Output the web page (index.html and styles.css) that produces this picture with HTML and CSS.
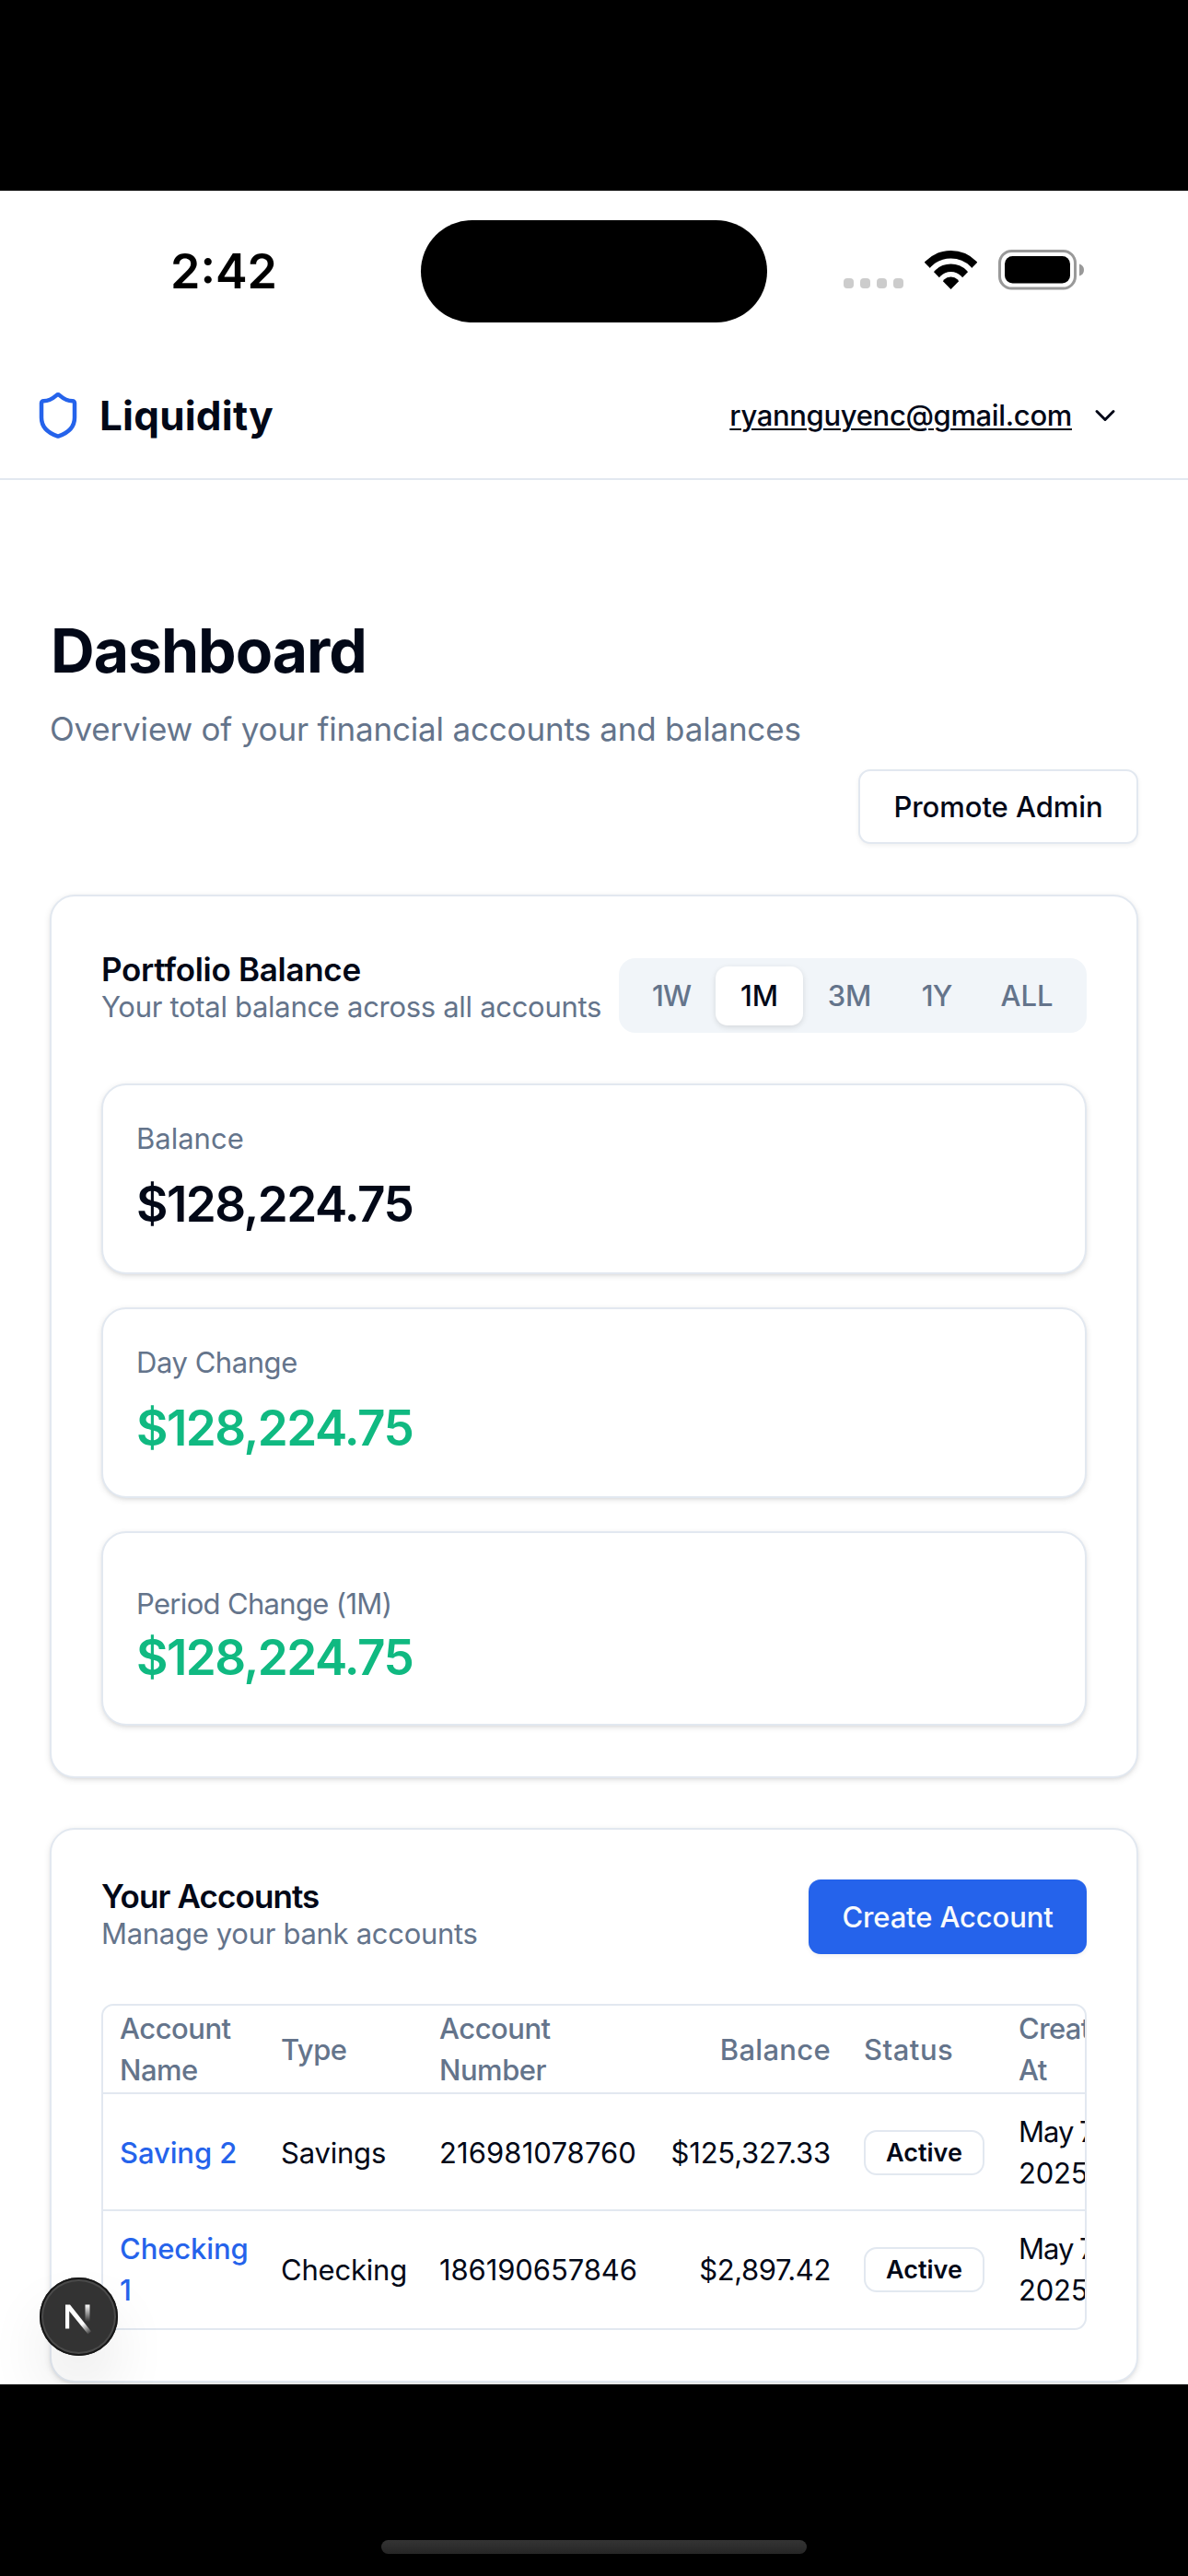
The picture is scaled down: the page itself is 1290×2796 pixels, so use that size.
FILE: index.html
```
<!DOCTYPE html>
<html lang="en">
<head>
<meta charset="utf-8">
<title>Liquidity – Dashboard</title>
<link rel="stylesheet" href="styles.css">
</head>
<body>
<div class="screen">
  <div class="statusbar">
    <div class="clock">2:42</div>
    <div class="island"></div>
    <div class="indicators">
      <div class="signal"><i></i><i></i><i></i><i></i></div>
      <svg class="wifi" viewBox="0 0 57 42">
        <clipPath id="fan"><path d="M28.5 42L-6 6.9V-4H63V6.900Z"/></clipPath>
        <g clip-path="url(#fan)">
          <circle cx="28.5" cy="39" r="34.75" fill="none" stroke="#000" stroke-width="8.5"/>
          <circle cx="28.5" cy="39" r="20.25" fill="none" stroke="#000" stroke-width="8.500"/>
          <circle cx="28.5" cy="39" r="10.5"/>
        </g>
      </svg>
      <svg class="battery" viewBox="0 0 93 44">
        <rect x="1.5" y="1.500" width="82" height="40.500" rx="13" fill="none" stroke="#999" stroke-width="3"/>
        <rect x="7" y="7" width="71" height="29.500" rx="8.500"/>
        <path d="M88 15.500q5 1.500 5 6.500t-5 6.500Z" fill="#999"/>
      </svg>
    </div>
  </div>

  <header class="topbar">
    <div class="brand">
      <svg class="shield" viewBox="0 0 24 24" fill="none" stroke="currentColor" stroke-width="2" stroke-linecap="round" stroke-linejoin="round"><path d="M20 13c0 5-3.500 7.500-7.660 8.950a1 1 0 0 1-.67-.01C7.500 20.500 4 18 4 13V6a1 1 0 0 1 1-1c2 0 4.500-1.200 6.240-2.720a1.170 1.170 0 0 1 1.520 0C14.510 3.810 17 5 19 5a1 1 0 0 1 1 1z"/></svg>
      <span class="brand-name">Liquidity</span>
    </div>
    <div class="user">
      <a class="email">ryannguyenc@gmail.com</a>
      <svg class="chevron" viewBox="0 0 24 24" fill="none" stroke="currentColor" stroke-width="2" stroke-linecap="round" stroke-linejoin="round"><path d="m6 9 6 6 6-6"/></svg>
    </div>
  </header>

  <main class="page">
    <h1>Dashboard</h1>
    <p class="lead">Overview of your financial accounts and balances</p>
    <div class="actions"><button class="btn btn-outline">Promote Admin</button></div>

    <section class="card portfolio">
      <div class="card-head">
        <div>
          <h2>Portfolio Balance</h2>
          <p class="desc">Your total balance across all accounts</p>
        </div>
        <div class="tabs">
          <span class="tab tab-1w">1W</span>
          <span class="tab tab-1m active">1M</span>
          <span class="tab tab-3m">3M</span>
          <span class="tab tab-1y">1Y</span>
          <span class="tab tab-all">ALL</span>
        </div>
      </div>
      <div class="stats">
        <div class="stat">
          <div class="label">Balance</div>
          <div class="amount">$128,224.75</div>
        </div>
        <div class="stat">
          <div class="label label-day">Day Change</div>
          <div class="amount up">$128,224.75</div>
        </div>
        <div class="stat stat-period">
          <div class="label label-period">Period Change (1M)</div>
          <div class="amount up">$128,224.75</div>
        </div>
      </div>
    </section>

    <section class="card accounts">
      <div class="card-head">
        <div>
          <h2 class="tight">Your Accounts</h2>
          <p class="desc">Manage your bank accounts</p>
        </div>
        <button class="btn btn-primary">Create Account</button>
      </div>
      <div class="table-wrap">
        <table>
          <colgroup><col class="c-name"><col class="c-type"><col class="c-number"><col class="c-balance"><col class="c-status"><col class="c-created"></colgroup>
          <thead>
            <tr><th class="narrow">Account<br>Name</th><th class="narrow">Type</th><th class="narrow">Account<br>Number</th><th class="num">Balance</th><th class="wide">Status</th><th class="created">Created<br>At</th></tr>
          </thead>
          <tbody>
            <tr><td><a class="link">Saving 2</a></td><td>Savings</td><td class="digits">216981078760</td><td class="num">$125,327.33</td><td><span class="badge">Active</span></td><td class="created"><span class="day">May 7,</span><br>2025</td></tr>
            <tr><td><a class="link">Checking<br>1</a></td><td>Checking</td><td class="digits-b">186190657846</td><td class="num num-tight">$2,897.42</td><td><span class="badge">Active</span></td><td class="created"><span class="day">May 7,</span><br>2025</td></tr>
          </tbody>
        </table>
      </div>
    </section>
  </main>

  <div class="dev-badge">
    <svg viewBox="0 0 85 85">
      <defs>
        <linearGradient id="diag" gradientUnits="userSpaceOnUse" x1="40" y1="44" x2="54" y2="62"><stop offset="0" stop-color="#fff"/><stop offset=".4" stop-color="#fff"/><stop offset="1" stop-color="#fff" stop-opacity="0"/></linearGradient>
        <linearGradient id="stem" gradientUnits="userSpaceOnUse" x1="0" y1="29.5" x2="0" y2="48"><stop offset="0" stop-color="#fff"/><stop offset="1" stop-color="#fff" stop-opacity="0"/></linearGradient>
      </defs>
      <path d="M28 55.500V29.500H33L56 58.500L52.500 61.500L32.200 36.500V55.500Z" fill="url(#diag)"/>
      <rect x="49.500" y="29.500" width="5" height="18.500" fill="url(#stem)"/>
    </svg>
  </div>
</div>
<div class="home"><div class="home-bar"></div></div>
</body>
</html>
```
FILE: styles.css
```
* { box-sizing: border-box; }
html, body { margin: 0; }
body {
  width: 1290px;
  height: 2796px;
  padding-top: 207px;
  background: #000;
  color: #020817;
  font-family: Inter, "Liberation Sans", sans-serif;
  font-size: 31px;
  line-height: 45px;
  overflow: hidden;
}
h1, h2, p { margin: 0; }
svg { display: block; flex: none; }

.screen {
  position: relative;
  height: 2381px;
  background: #fff;
  overflow: hidden;
}

/* phone status bar */
.statusbar {
  display: grid;
  grid-template-columns: 457px 376px 1fr;
  align-items: center;
  height: 175px;
}
.clock {
  padding-left: 185px;
  color: #000;
  font-size: 52px;
  font-weight: 600;
}
.island { height: 111px; border-radius: 56px; background: #000; }
.indicators {
  display: flex;
  align-items: center;
  padding-left: 83px;
  margin-top: -4px;
}
.signal { display: flex; gap: 7px; margin-top: 29px; }
.signal i { width: 11px; height: 11px; border-radius: 4px; background: #ccc; }
.wifi { width: 57px; height: 42px; margin-left: 23px; }
.battery { width: 93px; height: 44px; margin-left: 23px; }

/* app header */
.topbar {
  display: flex;
  align-items: center;
  justify-content: space-between;
  height: 139px;
  padding: 0 72px 0 36px;
  border-bottom: 2px solid #e2e8f0;
}
.brand { display: flex; align-items: center; gap: 18px; }
.shield { width: 54px; height: 54px; color: #2563eb; }
.brand-name { padding-top: 1px; font-size: 44px; font-weight: 700; letter-spacing: .2px; }
.user { display: flex; align-items: center; gap: 18px; }
.email {
  font-weight: 500;
  letter-spacing: -.34px;
  text-decoration: underline;
  text-decoration-thickness: 2px;
  text-underline-offset: 3px;
}
.chevron { width: 36px; height: 36px; }

/* page */
.page { padding: 145px 54px 0; }
h1 { padding-left: 1px; font-size: 66px; line-height: 80px; font-weight: 700; letter-spacing: -1px; }
.lead {
  margin-top: 18px;
  color: #64748b;
  font-size: 35px;
  line-height: 54px;
  letter-spacing: -.19px;
}
.actions { display: flex; justify-content: flex-end; margin-top: 17px; }
.btn {
  display: flex;
  align-items: center;
  justify-content: center;
  height: 81px;
  padding: 0;
  border: 0;
  border-radius: 13px;
  font: 500 31px/45px Inter, "Liberation Sans", sans-serif;
  box-shadow: 0 2px 5px rgba(0, 0, 0, .06);
}
.btn-outline { width: 304px; border: 2px solid #e2e8f0; background: #fff; color: #020817; letter-spacing: -.05px; }
.btn-primary { width: 302px; background: #2563eb; color: #f8fafc; letter-spacing: -.13px; }

.card, .stat {
  border: 2px solid #e2e8f0;
  border-radius: 27px;
  background: #fff;
  box-shadow: 0 2px 7px rgba(0, 0, 0, .1), 0 2px 4px -2px rgba(0, 0, 0, .1);
}
.card { padding: 0 54px 55px; }
.portfolio { margin-top: 55px; padding-top: 61px; }
.accounts { margin-top: 54px; padding-top: 54px; }
.card-head { display: flex; justify-content: space-between; align-items: flex-start; }
h2 { font-size: 35px; line-height: 36px; font-weight: 600; letter-spacing: -.3px; }
h2.tight { letter-spacing: -.9px; }
.desc { color: #64748b; letter-spacing: -.3px; white-space: nowrap; }

.tabs {
  display: flex;
  align-items: center;
  width: 508px;
  height: 81px;
  margin-top: 6px;
  padding: 0 9px;
  border-radius: 18px;
  background: #f1f5f9;
  color: #64748b;
  font-weight: 500;
}
.tab {
  display: flex;
  align-items: center;
  justify-content: center;
  height: 64px;
  border-radius: 13px;
}
.tab-1w { width: 96px; letter-spacing: -1px; }
.tab-1m { width: 95px; }
.tab-3m { width: 101px; }
.tab-1y { width: 88px; letter-spacing: -1px; }
.tab-all { width: 108px; }
.tab.active { background: #fff; color: #020817; box-shadow: 0 2px 6px rgba(0, 0, 0, .12); }

.stats { display: flex; flex-direction: column; gap: 36px; margin-top: 55px; }
.stat { height: 207px; padding: 35px 36px 0; }
.label { color: #64748b; }
.label-day { letter-spacing: -.45px; }
.label-period { letter-spacing: -.67px; }
.amount { margin-top: 22px; font-size: 53px; line-height: 54px; font-weight: 600; letter-spacing: -1.56px; }
.amount.up { color: #10b981; }
.stat-period { height: 211px; padding-top: 54px; }
.stat-period .amount { margin-top: 9px; }

/* accounts table */
.table-wrap {
  height: 354px;
  margin-top: 54px;
  border: 2px solid #e2e8f0;
  border-radius: 13px;
  overflow: hidden;
}
table { width: 1176px; table-layout: fixed; border-spacing: 0; }
.c-name { width: 175px; }
.c-type { width: 172px; }
.c-number { width: 251px; }
.c-balance { width: 210px; }
.c-status { width: 168px; }
.c-created { width: 200px; }
th, td { padding: 18px; text-align: left; vertical-align: middle; white-space: nowrap; letter-spacing: -.2px; }
th {
  padding: 2px 18px 2px;
  border-bottom: 2px solid #e2e8f0;
  color: #64748b;
  font-weight: 500;
}
th.narrow { letter-spacing: -.5px; }
th.wide { letter-spacing: .5px; }
th.num { letter-spacing: .3px; }
tbody tr:first-child td { padding-bottom: 17px; border-bottom: 2px solid #e2e8f0; }
.num { text-align: right; }
.num-tight { letter-spacing: -.4px; }
.digits { letter-spacing: .1px; }
.digits-b { letter-spacing: -.1px; }
th.created { letter-spacing: -.6px; }
.day { letter-spacing: -1px; word-spacing: -1px; }
.link { color: #2563eb; font-weight: 500; letter-spacing: -.1px; }
.badge {
  display: flex;
  align-items: center;
  justify-content: center;
  width: 131px;
  height: 49px;
  border: 2px solid #e2e8f0;
  border-radius: 14px;
  font-size: 27px;
  font-weight: 600;
  letter-spacing: 0;
}

/* floating dev tools button */
.dev-badge {
  position: absolute;
  left: 43px;
  bottom: 31px;
  width: 85px;
  height: 85px;
  border-radius: 50%;
  background: #333;
  box-shadow: inset 0 0 0 2px #171717, inset 0 0 0 4px #4a4a4a, 0 36px 72px -18px rgba(0, 0, 0, .24);
}

.home { display: flex; justify-content: center; padding-top: 169px; }
.home-bar { width: 462px; height: 15px; border-radius: 8px; background: linear-gradient(#343434, #262626); }
```
